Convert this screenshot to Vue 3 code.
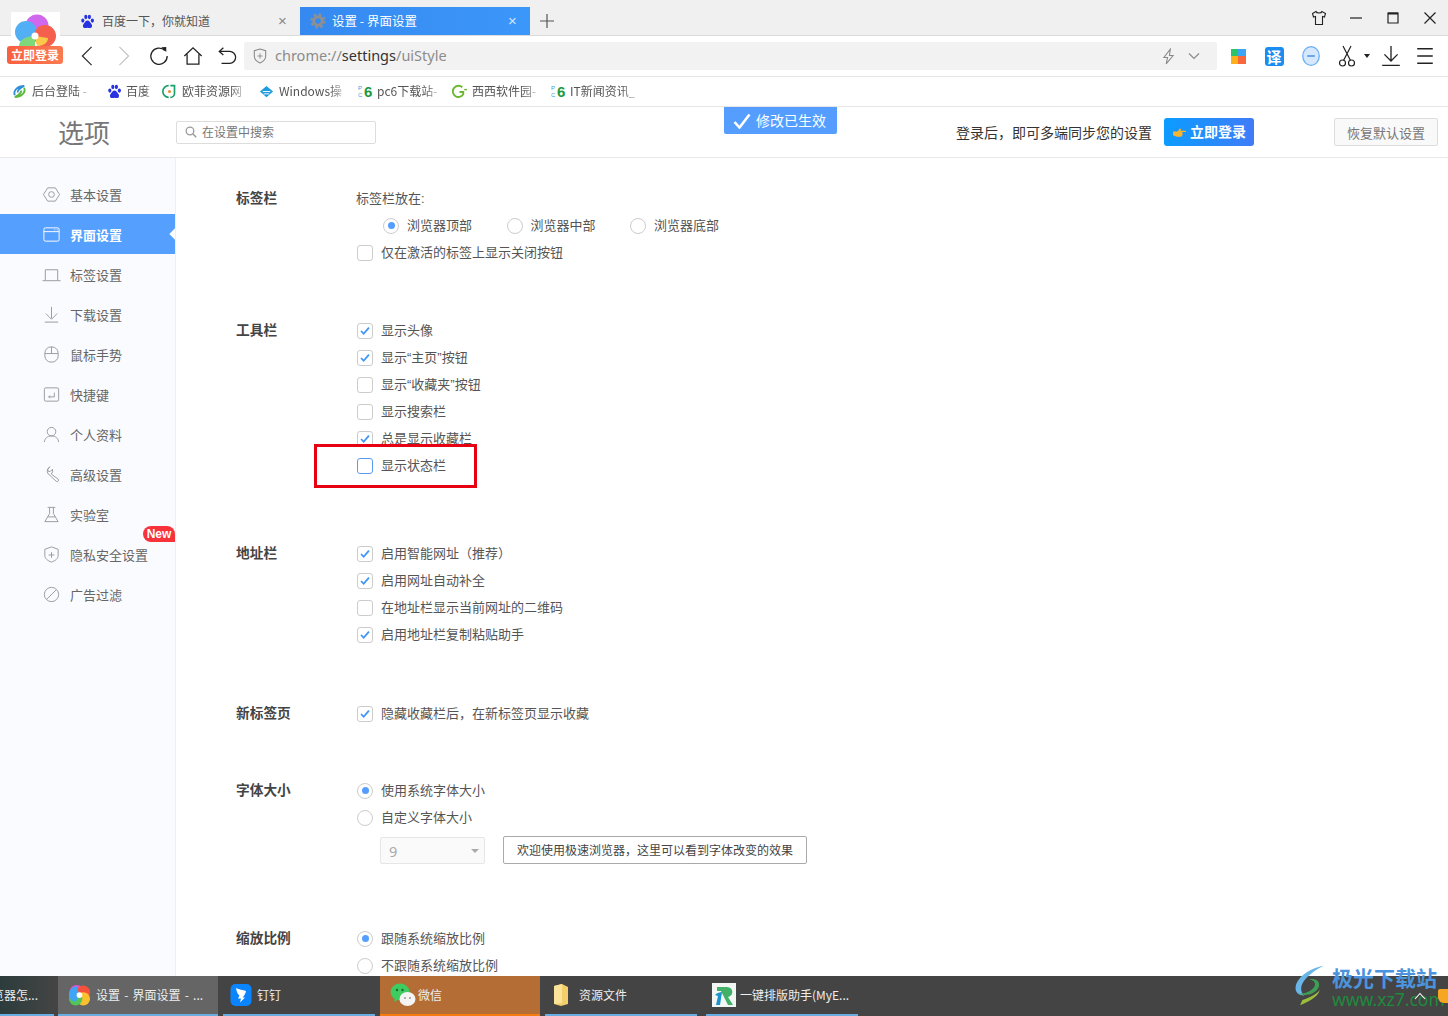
<script setup>
const bookmarks = [
  { t: '后台登陆 -', w: 95, gap: 5, k: 'swirl' },
  { t: '百度', w: 55, gap: 4, k: 'paw' },
  { t: '欧菲资源网', w: 97, gap: 5, k: 'ou' },
  { t: 'Windows操', w: 99, gap: 5, k: 'win' },
  { t: 'pc6下载站-', w: 94, gap: 4, k: 'pc6' },
  { t: '西西软件园-', w: 99, gap: 5, k: 'g' },
  { t: 'IT新闻资讯_', w: 90, gap: 4, k: 'pc6' }
]
const nav = [
  { t: '基本设置', k: 'hex' },
  { t: '界面设置', k: 'win', active: true },
  { t: '标签设置', k: 'tab' },
  { t: '下载设置', k: 'down' },
  { t: '鼠标手势', k: 'mouse' },
  { t: '快捷键', k: 'key' },
  { t: '个人资料', k: 'user' },
  { t: '高级设置', k: 'wrench' },
  { t: '实验室', k: 'flask' },
  { t: '隐私安全设置', k: 'shield', badge: true },
  { t: '广告过滤', k: 'ban' }
]
const sections = [
  { title: '标签栏', cls: 's1', rows: [
    { type: 'text', t: '标签栏放在:' },
    { type: 'radios', items: [{ t: '浏览器顶部', on: true }, { t: '浏览器中部' }, { t: '浏览器底部' }] },
    { type: 'check', t: '仅在激活的标签上显示关闭按钮' } ] },
  { title: '工具栏', cls: 's2', rows: [
    { type: 'check', t: '显示头像', on: true },
    { type: 'check', t: '显示“主页”按钮', on: true },
    { type: 'check', t: '显示“收藏夹”按钮' },
    { type: 'check', t: '显示搜索栏' },
    { type: 'check', t: '总是显示收藏栏', on: true },
    { type: 'check', t: '显示状态栏', focus: true } ] },
  { title: '地址栏', cls: 's3', rows: [
    { type: 'check', t: '启用智能网址（推荐）', on: true },
    { type: 'check', t: '启用网址自动补全', on: true },
    { type: 'check', t: '在地址栏显示当前网址的二维码' },
    { type: 'check', t: '启用地址栏复制粘贴助手', on: true } ] },
  { title: '新标签页', cls: 's4', rows: [
    { type: 'check', t: '隐藏收藏栏后，在新标签页显示收藏', on: true } ] },
  { title: '字体大小', cls: 's5', rows: [
    { type: 'radio', t: '使用系统字体大小', on: true },
    { type: 'radio', t: '自定义字体大小' },
    { type: 'font' } ] },
  { title: '缩放比例', cls: 's6', rows: [
    { type: 'radio', t: '跟随系统缩放比例', on: true },
    { type: 'radio', t: '不跟随系统缩放比例' } ] }
]
</script>

<template>
  <div class="page">
    <div class="tabbar">
      <div class="tab">
        <svg class="paw" viewBox="0 0 16 16"><ellipse cx="3" cy="7" rx="1.7" ry="2.2" fill="#2932e1"/><ellipse cx="6.2" cy="3.2" rx="1.7" ry="2.3" fill="#2932e1"/><ellipse cx="10" cy="3.2" rx="1.7" ry="2.3" fill="#2932e1"/><ellipse cx="13.2" cy="7" rx="1.7" ry="2.2" fill="#2932e1"/><path d="M8 7c-2 0-2.500 2-4 3.300C2.500 12 3 15 5.500 15c1 0 1.600-.4 2.500-.4s1.500.4 2.500.4c2.500 0 3-3 1.500-4.700C10.500 9 10 7 8 7z" fill="#2932e1"/></svg>
        <span class="tab-t">百度一下，你就知道</span>
        <span class="tab-x">×</span>
      </div>
      <div class="tab active">
        <svg class="gear" viewBox="0 0 16 16"><circle cx="8" cy="8" r="4.200" fill="none" stroke="#8d8f92" stroke-width="3"/><circle cx="8" cy="8" r="6.500" fill="none" stroke="#8d8f92" stroke-width="2.400" stroke-dasharray="2.600 2.500"/></svg>
        <span class="tab-t">设置 - 界面设置</span>
        <span class="tab-x">×</span>
      </div>
      <svg class="plus" viewBox="0 0 14 14"><path d="M7 0v14M0 7h14" stroke="#555" stroke-width="1.200"/></svg>
      <div class="winctl">
        <svg viewBox="0 0 16 16"><path d="M5 1.500 1.500 3.500l1 3.500 2-.5v8h7v-8l2 .5 1-3.500L11 1.500c-.5 2-5.500 2-6 0z" fill="none" stroke="#222" stroke-width="1.100"/></svg>
        <svg viewBox="0 0 16 16"><path d="M2 8h12" stroke="#222" stroke-width="1.200"/></svg>
        <svg viewBox="0 0 16 16"><path d="M3 3h10v10H3z" fill="none" stroke="#222" stroke-width="1.200"/><path d="M3 3.500h10" stroke="#222" stroke-width="2"/></svg>
        <svg viewBox="0 0 16 16"><path d="m2.500 2.500 11 11M13.500 2.500l-11 11" stroke="#222" stroke-width="1.200"/></svg>
      </div>
    </div>

    <div class="toolbar">
      <button class="tb w37"><svg viewBox="0 0 20 24"><path d="M15 2 5 12l10 10" fill="none" stroke="#333" stroke-width="1.400"/></svg></button>
      <button class="tb w37"><svg viewBox="0 0 20 24"><path d="m5 2 10 10L5 22" fill="none" stroke="#c4c4c4" stroke-width="1.400"/></svg></button>
      <button class="tb w34"><svg viewBox="0 0 22 22"><path d="M17.500 5A9 9 0 1 0 20 11" fill="none" stroke="#222" stroke-width="1.400"/><path d="M13.500 1.500 19 1v5.500z" fill="#222"/></svg></button>
      <button class="tb w34"><svg viewBox="0 0 22 22"><path d="M1.500 11 11 2l9.500 9M4.500 9v11h13V9" fill="none" stroke="#222" stroke-width="1.400"/></svg></button>
      <button class="tb w34"><svg viewBox="0 0 22 22"><path d="M3 6h11a6 6 0 0 1 0 13H5" fill="none" stroke="#222" stroke-width="1.400"/><path d="M7 2 2.500 6 7 10" fill="none" stroke="#222" stroke-width="1.400"/></svg></button>
      <div class="addr">
        <svg class="addr-shield" viewBox="0 0 16 18"><path d="M8 1 14.500 3v6c0 4-3 6.500-6.500 8C4.500 15.500 1.500 13 1.500 9V3z" fill="none" stroke="#888" stroke-width="1.200"/><path d="M8 6v6M5 9h6" stroke="#888" stroke-width="1"/></svg>
        <span class="url">chrome://<b>settings</b>/uiStyle</span>
        <svg class="bolt" viewBox="0 0 14 18"><path d="M9 1 2 10h4l-1.500 7L12 8H8z" fill="none" stroke="#888" stroke-width="1.100"/></svg>
        <svg class="chev" viewBox="0 0 12 8"><path d="m1 1.500 5 5 5-5" fill="none" stroke="#888" stroke-width="1.100"/></svg>
      </div>
      <div class="tb w42"><span class="grid4"><i class="g"></i><i class="b"></i><i class="y"></i><i class="o"></i></span></div>
      <div class="tb w30"><span class="yi">译</span></div>
      <div class="tb w44"><svg viewBox="0 0 18 20"><ellipse cx="9" cy="10" rx="7.500" ry="8.500" fill="#d5e8fd" stroke="#6db0f5" stroke-width="1.200"/><path d="M5.500 10h7" stroke="#5a9fee" stroke-width="1.600"/></svg></div>
      <div class="tb w28"><svg viewBox="0 0 18 22"><circle cx="4.500" cy="18" r="3" fill="none" stroke="#222" stroke-width="1.200"/><circle cx="13.500" cy="18" r="3" fill="none" stroke="#222" stroke-width="1.200"/><path d="M5.500 15.500 13 1M12.500 15.500 5 1" stroke="#222" stroke-width="1.200"/></svg></div>
      <div class="tb w12"><span class="caret"></span></div>
      <div class="tb w36"><svg viewBox="0 0 18 20"><path d="M9 1v13M3 8.500l6 6 6-6M1 18.500h16" fill="none" stroke="#222" stroke-width="1.200"/></svg></div>
      <div class="tb w32"><svg viewBox="0 0 18 18"><path d="M2 2.500h14M2 9h14M2 15.500h14" stroke="#222" stroke-width="1.300"/></svg></div>
    </div>

    <div class="bookbar">
      <div v-for="b in bookmarks" :key="b.t" class="bm" :style="{ width: b.w + 'px', gap: b.gap + 'px' }">
        <svg v-if="b.k === 'swirl'" class="bi" viewBox="0 0 16 16"><path d="M3 12C1 7 6 2 13 2 9 4 6 6 6 9" fill="none" stroke="#2f8fd8" stroke-width="2"/><path d="M13 4c2 5-3 10-10 10 4-2 7-4 7-7" fill="none" stroke="#5cb83a" stroke-width="2"/></svg>
        <svg v-else-if="b.k === 'paw'" class="bi" viewBox="0 0 16 16"><ellipse cx="3" cy="7" rx="1.700" ry="2.200" fill="#2932e1"/><ellipse cx="6.200" cy="3.200" rx="1.700" ry="2.300" fill="#2932e1"/><ellipse cx="10" cy="3.200" rx="1.700" ry="2.300" fill="#2932e1"/><ellipse cx="13.200" cy="7" rx="1.700" ry="2.200" fill="#2932e1"/><path d="M8 7c-2 0-2.500 2-4 3.300C2.500 12 3 15 5.500 15c1 0 1.600-.4 2.500-.4s1.500.4 2.500.4c2.500 0 3-3 1.500-4.700C10.500 9 10 7 8 7z" fill="#2932e1"/></svg>
        <svg v-else-if="b.k === 'ou'" class="bi" viewBox="0 0 16 18"><path d="M7 2a7 7 0 1 0 0 14" fill="none" stroke="#1a9e6a" stroke-width="2"/><path d="M9 2h5v9a5 5 0 0 1-5 5" fill="none" stroke="#1a9e6a" stroke-width="2"/><circle cx="8" cy="9" r="1.800" fill="#f08a24"/></svg>
        <svg v-else-if="b.k === 'win'" class="bi" viewBox="0 0 16 16"><path d="M1 8 8 2l7 6-7 6z" fill="#1d9be0"/><path d="M4 8h8M5 10.500h6" stroke="#fff" stroke-width="1"/></svg>
        <span v-else-if="b.k === 'pc6'" class="pc6"><span class="pc"><i>P</i><i>C</i></span><span class="six">6</span></span>
        <svg v-else class="bi" viewBox="0 0 16 16"><path d="M11 3.500A6 6 0 1 0 12 11V8.500H8" fill="none" stroke="#6bb830" stroke-width="2"/><path d="M13 6h3" stroke="#6bb830" stroke-width="1.500"/></svg>
        <span class="bm-t">{{ b.t }}</span>
      </div>
    </div>

    <header class="head">
      <div class="head-title">选项</div>
      <div class="search">
        <svg viewBox="0 0 12 12"><circle cx="5" cy="5" r="3.800" fill="none" stroke="#999" stroke-width="1.300"/><path d="m8 8 3.200 3.200" stroke="#999" stroke-width="1.500"/></svg>
        <span class="lbl">在设置中搜索</span>
      </div>
      <div class="head-tip">登录后，即可多端同步您的设置</div>
      <button class="login"><svg viewBox="0 0 16 12"><path d="M1 5h5l2-3h2l-1 2h6v1.500H11l.5 3-1.500 2H5L1 9z" fill="#f5b52e"/></svg><span class="lbl">立即登录</span></button>
      <button class="reset">恢复默认设置</button>
    </header>

    <div class="main">
      <aside class="side">
        <div v-for="n in nav" :key="n.t" class="nav" :class="{ on: n.active }">
          <svg class="ni" viewBox="0 0 20 20" fill="none" stroke="currentColor" stroke-width="1">
            <template v-if="n.k === 'hex'"><path d="M6 3h8l4.500 7-4.500 7H6l-4.500-7z"/><circle cx="10" cy="10" r="3"/></template>
            <template v-else-if="n.k === 'win'"><rect x="2" y="3" width="16" height="14" rx="1.500"/><path d="M2 7h16M13 5h1M15.500 5h1"/></template>
            <template v-else-if="n.k === 'tab'"><path d="M0.500 16.500h19M3.500 16V5h13v11"/></template>
            <template v-else-if="n.k === 'down'"><path d="M10 2v12M4 9l6 6 6-6M3 18h14"/></template>
            <template v-else-if="n.k === 'mouse'"><rect x="3" y="2" width="14" height="16" rx="6.500"/><path d="M3 9h14M10 2v7"/></template>
            <template v-else-if="n.k === 'key'"><rect x="2.500" y="3" width="15" height="14" rx="1.500"/><path d="M13 8v4.500H7M8.500 11 7 12.500 8.500 14"/></template>
            <template v-else-if="n.k === 'user'"><circle cx="10" cy="7" r="4.500"/><path d="M2.500 18c.5-4 3-6.500 7.500-6.500s7 2.500 7.500 6.500"/></template>
            <template v-else-if="n.k === 'wrench'"><path d="M8.500 1.900 6 4.500l.5 2 2 .5L11 4.500a5 5 0 0 1-1.200 5.100L17.200 15a1.600 1.600 0 0 1-2.200 2.200L8.400 11A5 5 0 0 1 8.500 1.900z"/></template>
            <template v-else-if="n.k === 'flask'"><path d="M6 2.500h8M8 3v6l-5 8.500h14L12 9V3M6 12.500h8"/></template>
            <template v-else-if="n.k === 'shield'"><path d="M10 2l7 2.500V11c0 3.500-3 5.500-7 7-4-1.500-7-3.500-7-7V4.500z"/><path d="M10 7.500v6M7 10.500h6"/></template>
            <template v-else><circle cx="10" cy="10" r="7.500"/><path d="m5 15 10-10"/></template>
          </svg>
          <span>{{ n.t }}</span>
          <span v-if="n.badge" class="new">New</span>
        </div>
      </aside>

      <main class="content">
        <section v-for="s in sections" :key="s.title" class="sec" :class="s.cls">
          <h3 class="sec-t">{{ s.title }}</h3>
          <div class="sec-b">
            <template v-for="(r, i) in s.rows" :key="i">
              <div v-if="r.type === 'text'" class="row"><span>{{ r.t }}</span></div>
              <div v-else-if="r.type === 'radios'" class="row radios">
                <label v-for="it in r.items" :key="it.t" class="ritem">
                  <span class="radio" :class="{ on: it.on }"></span><span>{{ it.t }}</span>
                </label>
              </div>
              <div v-else-if="r.type === 'check'" class="row">
                <span class="check" :class="{ focus: r.focus }">
                  <svg v-if="r.on" viewBox="0 0 16 16"><path d="m3.500 8 3 3.200 6-7" fill="none" stroke="#3f95f5" stroke-width="2"/></svg>
                </span><span>{{ r.t }}</span>
              </div>
              <div v-else-if="r.type === 'radio'" class="row">
                <span class="radio" :class="{ on: r.on }"></span><span>{{ r.t }}</span>
              </div>
              <div v-else class="fontrow">
                <div class="select">9<span class="sel-caret"></span></div>
                <div class="preview">欢迎使用极速浏览器，这里可以看到字体改变的效果</div>
              </div>
            </template>
          </div>
        </section>
      </main>
    </div>

    <footer class="taskbar">
      <div class="task first"><span class="task-t">览器怎...</span></div>
      <div class="task t-set cur">
        <svg class="ti" viewBox="0 0 24 24"><circle cx="9" cy="9" r="7.500" fill="#e84fd0"/><circle cx="16" cy="9" r="7" fill="#f4523b"/><circle cx="16" cy="16" r="7" fill="#fbc02d"/><circle cx="8" cy="16" r="7" fill="#52c45a"/><path d="M1 12a8 8 0 0 1 8-9l3 9-4 7a8 8 0 0 1-7-7z" fill="#3fa4f5"/><circle cx="12" cy="12" r="3" fill="#fff"/></svg>
        <span class="task-t wide">设置 - 界面设置 - ...</span>
      </div>
      <div class="task t-ding">
        <svg class="ti" viewBox="0 0 22 24"><rect x="0.500" y="1" width="21" height="22" rx="5" fill="#0a84ff"/><path d="M6 5c3 1.500 7 2 10 3-.5 3-2 5-3.500 6.500H15l-5 5 1-4H8l1.500-3C8 11.500 6.500 9 6 5z" fill="#fff"/></svg>
        <span class="task-t">钉钉</span>
      </div>
      <div class="task t-wx warm">
        <svg class="ti wx" viewBox="0 0 26 26"><ellipse cx="10" cy="10" rx="9.500" ry="8.500" fill="#3ecb5f"/><path d="m5 16-1 4 5-3z" fill="#3ecb5f"/><circle cx="7" cy="8" r="1.200" fill="#1c6a30"/><circle cx="12.500" cy="8" r="1.200" fill="#1c6a30"/><ellipse cx="17.500" cy="17" rx="8" ry="7" fill="#f4f4f4"/><circle cx="15" cy="16" r="1" fill="#999"/><circle cx="20" cy="16" r="1" fill="#999"/></svg>
        <span class="task-t">微信</span>
      </div>
      <div class="task t-folder">
        <svg class="ti fold" viewBox="0 0 16 24"><path d="M1 3l8-2 6 3v17l-7 2-7-2z" fill="#f3cf6c"/><path d="M1 3l8-2v19l-8 1z" fill="#fbe49a"/></svg>
        <span class="task-t">资源文件</span>
      </div>
      <div class="task t-r">
        <svg class="ti" viewBox="0 0 24 24"><rect width="24" height="24" fill="#f3f7f4"/><path d="M5 4h10c7 0 7 9 1 10l5 8h-5L9 8H5z" fill="#43b06a"/><path d="M3 12c3-3 7-3 7-3L8 22H4l2-9z" fill="#1b93cf"/></svg>
        <span class="task-t">一键排版助手(MyE...</span>
      </div>
    </footer>

    <!-- overlays -->
    <div class="applogo">
      <svg viewBox="0 0 49 34"><rect width="49" height="34" fill="#fff"/><circle cx="26" cy="14" r="11.500" fill="#cf68ec"/><circle cx="15" cy="20" r="11" fill="#52aff5"/><circle cx="34" cy="24" r="11" fill="#f4604c"/><path d="M24 24 37 26c0 5-5 8-11 8z" fill="#fbc94a"/><path d="M8 34c0-6 7-10 16-10v10z" fill="#7fd77a"/><circle cx="24" cy="24" r="3.500" fill="#fff"/></svg>
      <span class="appbadge">立即登录</span>
    </div>
    <div class="toast">
      <svg viewBox="0 0 18 16"><path d="m1.500 9 5 5.500L16.500 1.500" fill="none" stroke="#fff" stroke-width="2.600"/></svg><span>修改已生效</span>
    </div>
    <div class="redbox"></div>
    <div class="wm">
      <svg class="wm-logo" viewBox="0 0 44 54"><path d="M40 1C22 4 4 16 3 30c-.5 7 6 11 12 10C9 36 9 28 14 21 20 13 30 6 40 1z" fill="#69b5e8"/><path d="M6 38c10 4 26 0 28-11 1-6-6-10-13-8 6 1 9 4 7 9-3 6-12 10-22 10z" fill="#3f9e55"/><path d="M9 53c10-4 23-10 26-20-5 6-15 11-23 13z" fill="#9cbf3b"/></svg>
      <div class="wm-name">极光下载站</div>
      <div class="wm-url">www.xz7.com</div>
    </div>
    <svg class="tray-up" viewBox="0 0 12 8"><path d="m1 7 5-5.500L11 7" fill="none" stroke="#fff" stroke-width="1.100"/></svg>
    <span class="tray-shield"></span>
  </div>
</template>

<style>
html, body { margin: 0; background: #fff; }
</style>

<style scoped>
.page { position: relative; width: 1448px; height: 1016px; overflow: hidden; display: flex; flex-direction: column; font-family: "Noto Sans CJK SC", "Noto Sans", sans-serif; font-size: 13px; color: #555; background: #fff; }
button { font-family: inherit; padding: 0; margin: 0; }
.lbl { margin-bottom: 2px; }

.tabbar { height: 35px; flex: none; background: #f0f0f0; border-bottom: 1px solid #dcdcdc; display: flex; align-items: flex-end; padding-left: 70px; }
.tab { width: 230px; height: 28px; display: flex; align-items: center; font-size: 12px; color: #555; box-sizing: border-box; padding-left: 10px; position: relative; }
.tab-t { margin-bottom: 2px; }
.tab.active { background: linear-gradient(90deg, #3589f0, #3c97fa); color: #fff; font-size: 12.500px; }
.paw { width: 15px; height: 15px; margin-right: 7px; }
.gear { width: 16px; height: 16px; margin-right: 6px; }
.tab-x { position: absolute; left: 208px; top: 3px; font-size: 15px; line-height: 22px; color: #888; font-family: "Liberation Sans", sans-serif; }
.active .tab-x { left: 208px; color: #cfe4ff; }
.plus { width: 14px; height: 14px; margin: 0 0 7px 10px; }
.winctl { margin-left: auto; height: 35px; display: flex; align-items: center; padding-right: 10px; align-self: flex-start; }
.winctl svg { width: 16px; height: 16px; margin-left: 21px; }
.winctl svg:first-child { margin-left: 0; }

.toolbar { height: 40px; flex: none; border-bottom: 1px solid #e6e6e6; display: flex; align-items: center; padding-left: 68px; background: #fff; box-sizing: content-box; }
.tb { background: none; border: 0; height: 40px; display: flex; align-items: center; justify-content: center; flex: none; padding: 0; }
.tb svg { width: 20px; height: 22px; }
.w37 { width: 37px; } .w34 { width: 34px; } .w42 { width: 42px; } .w30 { width: 30px; } .w44 { width: 44px; } .w28 { width: 28px; } .w12 { width: 12px; } .w36 { width: 36px; } .w32 { width: 32px; }
.addr { width: 973px; height: 28px; background: #f2f2f2; border-radius: 2px; display: flex; align-items: center; box-sizing: border-box; padding-left: 9px; flex: none; }
.addr-shield { width: 14px; height: 16px; margin-right: 8px; }
.url { font-family: "Noto Sans", sans-serif; font-size: 14.500px; color: #8c8c8c; line-height: 26px; margin-bottom: 2px; }
.url b { font-weight: 400; color: #333; }
.bolt { width: 13px; height: 17px; margin-left: auto; }
.chev { width: 12px; height: 8px; margin: 0 17px 0 13px; }
.grid4 { width: 15px; height: 15px; display: grid; grid-template-columns: 1fr 1fr; gap: 0; }
.grid4 i { display: block; }
.grid4 .g { background: #2cc36b; } .grid4 .b { background: #3da5f5; } .grid4 .y { background: #fbb01c; } .grid4 .o { background: #f8683c; }
.yi { width: 19px; height: 19px; background: #1c8df0; border-radius: 3px; color: #fff; font-size: 15px; line-height: 19px; text-align: center; font-weight: 700; }
.caret { width: 0; height: 0; border: 3px solid transparent; border-top: 4px solid #222; border-bottom: 0; }

.bookbar { height: 29px; flex: none; border-bottom: 1px solid #e6e6e6; display: flex; align-items: center; padding-left: 12px; font-size: 12px; }
.bm { display: flex; align-items: center; flex: none; color: #555; overflow: hidden; white-space: nowrap; }
.bi { width: 15px; height: 15px; flex: none; }
.bm-t { line-height: 18px; margin-bottom: 2px; -webkit-mask-image: linear-gradient(90deg, #000 80%, rgba(0,0,0,.35)); mask-image: linear-gradient(90deg, #000 80%, rgba(0,0,0,.35)); }
.pc6 { width: 15px; height: 18px; display: flex; align-items: center; flex: none; font-family: "Liberation Sans", sans-serif; }
.pc { display: flex; flex-direction: column; font-size: 6px; line-height: 7px; color: #3aa0e0; width: 6px; }
.pc i { font-style: normal; }
.six { font-size: 15px; line-height: 18px; font-weight: 700; color: #1c9a3c; }

.head { height: 50px; flex: none; border-bottom: 1px solid #e8e8e8; display: flex; align-items: center; padding: 0 10px 0 58px; }
.head-title { width: 118px; font-size: 26px; color: #777; line-height: 36px; flex: none; }
.search { width: 200px; height: 23px; box-sizing: border-box; border: 1px solid #ddd; border-radius: 2px; display: flex; align-items: center; padding-left: 8px; font-size: 12px; color: #777; margin-right: auto; }
.search svg { width: 12px; height: 12px; margin-right: 5px; }
.head-tip { font-size: 14px; color: #333; }
.login { width: 90px; height: 28px; margin-left: 12px; border: 0; border-radius: 3px; background: linear-gradient(90deg, #0b9cff, #3f7cf8); color: #fff; font-size: 14px; font-weight: 700; display: flex; align-items: center; justify-content: center; gap: 3px; }
.login svg { width: 15px; height: 11px; }
.reset { width: 104px; height: 28px; margin-left: 80px; border: 1px solid #ddd; border-radius: 2px; background: #f9f9f9; color: #777; font-size: 13px; }

.main { flex: 1; min-height: 0; display: flex; overflow: hidden; }
.side { width: 176px; flex: none; box-sizing: border-box; background: #f9fbff; border-right: 1px solid #ecf0f5; padding-top: 16px; }
.nav { height: 40px; display: flex; align-items: center; padding-left: 42px; padding-top: 1px; gap: 9px; color: #666; position: relative; box-sizing: border-box; line-height: 20px; }
.nav.on { background: #559fff; color: #fff; font-weight: 700; overflow: hidden; }
.nav.on::after { content: ""; position: absolute; right: -4px; top: 16px; width: 8px; height: 8px; background: #fff; transform: rotate(45deg); }
.ni { width: 19px; height: 19px; color: #999; flex: none; }
.nav.on .ni { color: #fff; }
.new { position: absolute; left: 143px; top: -8px; width: 32px; height: 16px; background: #f7323a; border-radius: 8px 8px 0 8px; color: #fff; font-family: "Liberation Sans", sans-serif; font-weight: 700; font-size: 12px; line-height: 16px; text-align: center; }

.content { flex: 1; min-width: 0; padding: 27px 0 0 60px; }
.sec { display: flex; align-items: flex-start; }
.s2 { margin-top: 51px; } .s3 { margin-top: 61px; } .s4 { margin-top: 52px; } .s5 { margin-top: 50px; } .s6 { margin-top: 61px; }
.sec-t { width: 120px; flex: none; margin: 0; font-size: 13.700px; font-weight: 700; color: #444; line-height: 25px; }
.sec-b { flex: 1; }
.row { height: 27px; display: flex; align-items: center; line-height: 20px; white-space: nowrap; color: #555; font-family: "Liberation Sans", "Noto Sans CJK SC", sans-serif; }
.radios { padding-left: 26px; }
.ritem { width: 123.500px; display: flex; align-items: center; flex: none; }
.check { width: 16px; height: 16px; box-sizing: border-box; border: 1px solid #ccc; border-radius: 3px; margin: 0 8px 0 1px; flex: none; background: #fff; display: block; }
.check svg { display: block; width: 14px; height: 14px; }
.check.focus { border-color: #5b9bef; }
.radio { width: 16px; height: 16px; box-sizing: border-box; border: 1px solid #ccc; border-radius: 50%; margin: 0 8px 0 1px; flex: none; position: relative; background: #fff; }
.radio.on::after { content: ""; position: absolute; left: 3.500px; top: 3.500px; width: 7px; height: 7px; border-radius: 50%; background: #559eff; }
.fontrow { display: flex; align-items: center; margin-top: 5px; height: 28px; padding-left: 24px; }
.select { width: 105px; height: 27px; box-sizing: border-box; border: 1px solid #e6e6e6; border-radius: 2px; background: #fafafa; color: #aaa; padding-left: 8px; font-family: "Noto Sans", sans-serif; font-size: 14.500px; line-height: 26px; position: relative; }
.sel-caret { position: absolute; right: 5px; top: 11px; width: 0; height: 0; border: 4px solid transparent; border-top: 4px solid #aaa; border-bottom: 0; }
.preview { width: 304px; height: 28px; margin-left: 18px; box-sizing: border-box; border: 1px solid #aaa; border-radius: 2px; font-size: 12px; line-height: 26px; padding-left: 13px; color: #444; white-space: nowrap; }

.taskbar { height: 40px; flex: none; background: #444; display: flex; font-size: 12px; color: #eee; }
.task { height: 40px; box-sizing: border-box; border-bottom: 2px solid #6aade0; display: flex; align-items: center; flex: none; white-space: nowrap; overflow: hidden; }
.first { width: 54px; margin-right: 4px; justify-content: flex-end; padding-right: 16px; background: linear-gradient(90deg, #2c3c3c, #444); }
.t-set { width: 160px; margin-right: 5px; padding-left: 10px; }
.cur { background: #646564; }
.t-ding { width: 152px; margin-right: 5px; padding-left: 7px; }
.t-wx { width: 160px; margin-right: 5px; padding-left: 10px; }
.warm { background: #b36d35; border-bottom-color: #f57c12; }
.t-folder { width: 152px; margin-right: 9px; padding-left: 8px; }
.t-r { width: 152px; padding-left: 6px; }
.ti { width: 23px; height: 24px; margin-right: 5px; flex: none; }
.wx { width: 26px; height: 26px; margin-right: 2px; }
.fold { width: 16px; margin-right: 10px; }
.t-r .ti { width: 24px; margin-right: 4px; }
.t-ding .ti { width: 22px; margin-right: 5px; }
.task-t { line-height: 18px; flex: none; }
.wide { word-spacing: 1.500px; }

.applogo { position: absolute; left: 7px; top: 12px; width: 56px; height: 52px; }
.applogo svg { display: block; position: absolute; left: 4px; top: 0; width: 49px; height: 34px; }
.appbadge { position: absolute; left: 0; top: 34px; width: 56px; height: 18px; background: linear-gradient(90deg, #f8603f, #fb7a52); border-radius: 3px; color: #fff; font-size: 12px; font-weight: 700; line-height: 18px; text-align: center; white-space: nowrap; }
.toast { position: absolute; left: 724px; top: 107px; width: 113px; height: 27px; background: #559eff; border-radius: 0 0 2px 2px; color: #fff; font-size: 14px; line-height: 23px; display: flex; align-items: center; box-sizing: border-box; padding-left: 9px; gap: 5px; }
.toast svg { width: 18px; height: 16px; }
.redbox { position: absolute; left: 314px; top: 444px; width: 163px; height: 44px; box-sizing: border-box; border: 3px solid #e60012; }
.wm { position: absolute; left: 1288px; top: 964px; width: 160px; height: 48px; pointer-events: none; }
.wm-logo { position: absolute; left: 0; top: 1px; width: 44px; height: 41px; }
.wm-name { position: absolute; left: 44px; top: 2px; font-size: 21px; line-height: 22px; font-weight: 700; color: #4b93dc; white-space: nowrap; }
.wm-url { position: absolute; left: 44px; top: 26px; font-family: "Noto Sans", sans-serif; font-size: 17.500px; line-height: 19px; color: #1f8a3e; white-space: nowrap; }
.tray-up { position: absolute; left: 1414px; top: 992px; width: 12px; height: 8px; }
.tray-shield { position: absolute; left: 1438px; top: 989px; width: 10px; height: 14px; background: #f5a623; border-radius: 2px 0 0 6px; }
</style>
